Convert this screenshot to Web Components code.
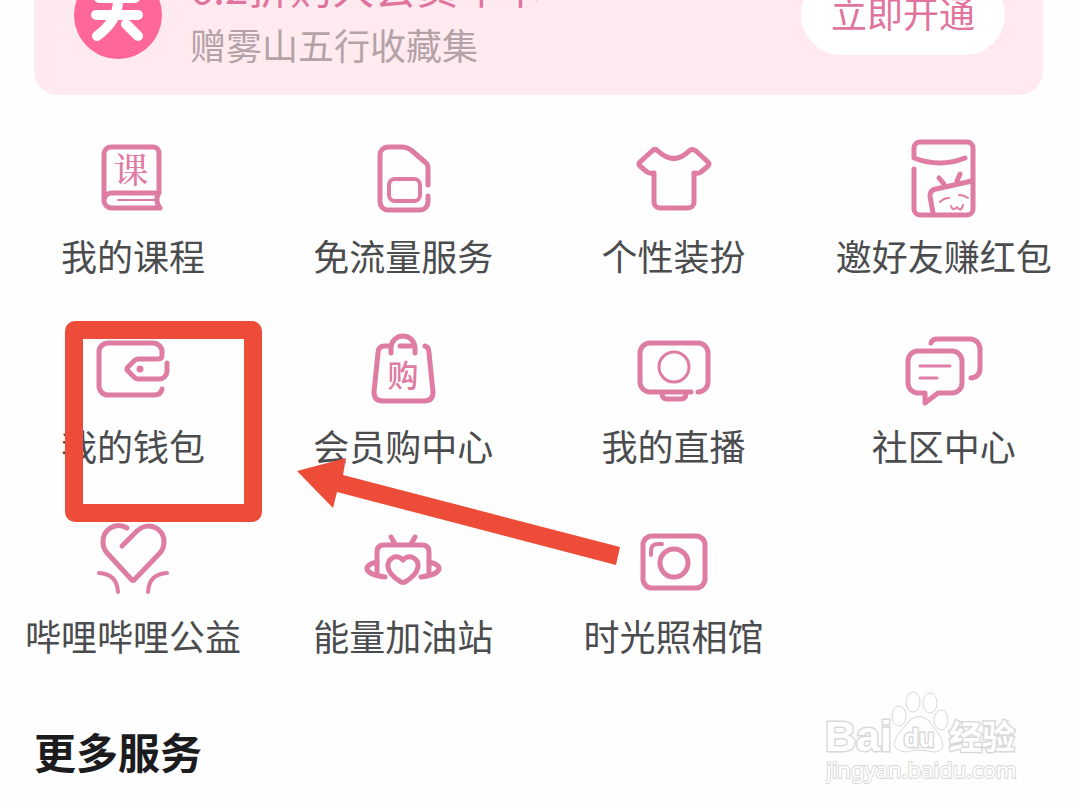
<!DOCTYPE html>
<html lang="zh-CN">
<head>
<meta charset="UTF-8">
<meta name="viewport" content="width=device-width, initial-scale=1">
<title>我的服务</title>
<style>
  body {
    margin: 0;
    position: relative;
    background: #fefefe;
    font-family: "Noto Sans CJK SC", sans-serif;
    overflow-x: hidden;
  }
</style>
</head>
<body>
<service-page></service-page>

<script>
const icons = {
  course: `
    <path d="M11 62V15a7 7 0 0 1 7-7H60a6 6 0 0 1 6 6V54H18.500a7.500 7.500 0 0 0 0 15H67Q61 61 66 54"/>
    <path d="M25 61H62" stroke-width="2"/>
    <text x="38" y="44" font-size="35" font-family="Noto Serif CJK SC, Noto Sans CJK SC, serif" font-weight="700">课</text>`,
  sim: `
    <path d="M65 46V29q0-4-3-6L48 11q-4-3-8-3H25a8 8 0 0 0-8 8V63a8 8 0 0 0 8 8H57a8 8 0 0 0 8-8V57"/>
    <rect x="26" y="40" width="31" height="22" rx="6" stroke-width="4"/>`,
  dress: `
    <path d="M24 12Q40 27 55 12Q58 9 62 12L74 23Q76 25 74 27L67 33Q65 35 60 34V63a6 6 0 0 1-6 6H26a6 6 0 0 1-6-6V34Q16 35 13 33L6 27Q4 25 6 23L18 12Q21 9 24 12Z"/>`,
  packet: `
    <path d="M61 19Q36 29 10 19V9a6 6 0 0 1 6-6H63a6 6 0 0 1 6 6V70a6 6 0 0 1-6 6H16a6 6 0 0 1-6-6V30"/>
    <path d="M29 74L26 57q0-6 6-7L68 42M35 39l5 6M56 35l-3 7"/>
    <path d="M36 63q4-4 9-4M55 56q5 0 9 3M47 67q2 6 6 1q4 6 6-2" stroke-width="2"/>`,
  wallet: `
    <path d="M69 60q-1 6-8 6H15a9 9 0 0 1-9-9V23a9 9 0 0 1 9-9H60a9 9 0 0 1 9 9v3q0 4-4 4H45q-2 0-4 2L35 38q-2 2 0 4l6 6q2 2 4 2H66a8 8 0 0 0 8-8V34"/>
    <circle cx="47" cy="40" r="3.500" fill="currentColor" stroke="none"/>`,
  bag: `
    <path d="M28 17H22q-7 0-7 7L11 63q0 9 9 9H61q9 0 9-9L66 24q0-6-4-7M28 24V19a12 12 0 0 1 24 0V24M37 17H51"/>
    <text x="40" y="58" font-size="31">购</text>`,
  live: `
    <path d="M57 63H16a10 10 0 0 1-10-10V24a10 10 0 0 1 10-10H64a10 10 0 0 1 10 10V53a10 10 0 0 1-10 10"/>
    <path d="M28 64q0 6 5 6H47q5 0 5-6"/>
    <circle cx="40" cy="38" r="15" stroke-width="3"/>`,
  community: `
    <path d="M14 22H48a10 10 0 0 1 10 10V54a10 10 0 0 1-10 10H34L21 74V64H14a10 10 0 0 1-10-10V32a10 10 0 0 1 10-10Z"/>
    <path d="M27 14q1-4 7-4H66a10 10 0 0 1 10 10V39q0 9-9 10"/>
    <path d="M16 37H46M16 49H33" stroke-width="3"/>`,
  charity: `
    <path d="M34 9C24 3 10 9 10 23Q10 30 15 35L38 60q2 3 4 0L66 35Q71 30 71 23C71 8 54 2 44 12L29 27"/>
    <path d="M6 54Q24 55 25 73M74 54Q56 55 55 73" stroke-width="4"/>`,
  energy: `
    <path d="M14 54V33q0-7 7-7H59q7 0 7 7V54M28 18l4 7M52 18l-4 7"/>
    <path d="M14 43C-1 46 0 55 22 58M66 43C81 46 80 55 58 58"/>
    <path d="M40 41C33 34 24 40 25 48C26 55 33 60 38 63q2 1 4 0C47 60 54 55 55 48C56 40 47 34 40 41Z"/>`,
  camera: `
    <rect x="9" y="17" width="62" height="52" rx="9"/>
    <circle cx="40" cy="44" r="14"/>
    <path d="M17 36V32q0-7 7-7h4" stroke-width="4"/>`
};

class ServicePage extends HTMLElement {
  constructor() {
    super();
    this.attachShadow({ mode: 'open' });
  }

  connectedCallback() {
    this.shadowRoot.innerHTML = `
      <style>
        :host {
          display: block;
        }

        /* the page is scrolled past the top of the banner */
        main {
          margin-top: -66px;
        }

        .services {
          display: grid;
          grid-template-columns: repeat(4, 1fr);
          row-gap: 54px;
          margin: 44px -2px 0;
        }

        h2 {
          margin: 66px 34px 22px;
          font-size: 42px;
          line-height: 60px;
          font-weight: 700;
          color: #1c1c1e;
        }
      </style>
      <main>
        <vip-banner>
          <span slot="title">6.2折购大会员年卡</span>
          <span slot="note">赠雾山五行收藏集</span>
          <span slot="action">立即开通</span>
        </vip-banner>
        <nav class="services">
          <service-item icon="course">我的课程</service-item>
          <service-item icon="sim">免流量服务</service-item>
          <service-item icon="dress">个性装扮</service-item>
          <service-item icon="packet">邀好友赚红包</service-item>
          <service-item icon="wallet">我的钱包</service-item>
          <service-item icon="bag">会员购中心</service-item>
          <service-item icon="live">我的直播</service-item>
          <service-item icon="community">社区中心</service-item>
          <service-item icon="charity">哔哩哔哩公益</service-item>
          <service-item icon="energy">能量加油站</service-item>
          <service-item icon="camera">时光照相馆</service-item>
        </nav>
        <h2>更多服务</h2>
      </main>
      <guide-marks></guide-marks>
      <site-watermark></site-watermark>
    `;
  }
}

class VipBanner extends HTMLElement {
  constructor() {
    super();
    this.attachShadow({ mode: 'open' });
  }

  connectedCallback() {
    this.shadowRoot.innerHTML = `
      <style>
        :host {
          display: block;
          padding: 0 34px;
        }

        .banner {
          display: flex;
          align-items: center;
          gap: 28px;
          height: 161px;
          padding: 0 38px;
          border-radius: 24px;
          background: #feeaef;
        }

        .logo {
          flex: none;
          width: 90px;
          height: 90px;
        }

        .text {
          flex: 1;
          display: flex;
          flex-direction: column;
          gap: 4px;
          padding-bottom: 6px;
          white-space: nowrap;
        }

        .title {
          font-size: 42px;
          line-height: 60px;
          color: #e0749d;
        }

        .note {
          font-size: 36px;
          line-height: 48px;
          color: #b3a2a8;
        }

        button {
          padding: 0 30px 6px;
          border: 0;
          border-radius: 40px;
          background: #fff;
          font-family: inherit;
          font-size: 36px;
          line-height: 74px;
          color: #e0749d;
        }
      </style>
      <section class="banner">
        <svg class="logo" viewBox="0 0 90 90" aria-hidden="true">
          <circle cx="46" cy="45" r="44" fill="#ff6699"/>
          <path d="M27 28H63M24 45H66M46 28Q47 50 25 66M54 54L66 66"
            fill="none" stroke="#fff" stroke-width="10" stroke-linecap="round"/>
        </svg>
        <div class="text">
          <div class="title"><slot name="title"></slot></div>
          <div class="note"><slot name="note"></slot></div>
        </div>
        <button type="button"><slot name="action"></slot></button>
      </section>
    `;
  }
}

class ServiceItem extends HTMLElement {
  constructor() {
    super();
    this.attachShadow({ mode: 'open' });
  }

  connectedCallback() {
    this.shadowRoot.innerHTML = `
      <style>
        :host {
          display: block;
        }

        a {
          display: flex;
          flex-direction: column;
          align-items: center;
          gap: 16px;
          font-size: 36px;
          line-height: 40px;
          white-space: nowrap;
          text-decoration: none;
          color: #4b4c4e;
        }

        svg {
          width: 80px;
          height: 80px;
          overflow: visible;
          color: #df7ca3;
          fill: none;
          stroke: currentColor;
          stroke-width: 5;
          stroke-linecap: round;
          stroke-linejoin: round;
        }

        svg text {
          fill: currentColor;
          stroke: none;
          font-weight: 500;
          text-anchor: middle;
        }
      </style>
      <a href="#">
        <svg viewBox="0 0 80 80">${icons[this.getAttribute('icon')]}</svg>
        <span><slot></slot></span>
      </a>
    `;
  }
}

// red frame and arrow that point out the wallet entry
class GuideMarks extends HTMLElement {
  constructor() {
    super();
    this.attachShadow({ mode: 'open' });
  }

  connectedCallback() {
    this.shadowRoot.innerHTML = `
      <style>
        :host {
          position: absolute;
          top: 321px;
          left: 65px;
          pointer-events: none;
        }

        svg {
          display: block;
          fill: #ec4c38;
        }
      </style>
      <svg width="556" height="246" viewBox="0 0 556 246" aria-hidden="true">
        <path fill-rule="evenodd" d="M10 0H187a10 10 0 0 1 10 10V191a10 10 0 0 1-10 10H10a10 10 0 0 1-10-10V10a10 10 0 0 1 10-10ZM18 18V183H179V18Z"/>
        <path d="M232 150L281 137L278 154L555 226L551 244L272 171L268 187Z"/>
      </svg>
    `;
  }
}

class SiteWatermark extends HTMLElement {
  constructor() {
    super();
    this.attachShadow({ mode: 'open' });
  }

  connectedCallback() {
    this.shadowRoot.innerHTML = `
      <style>
        :host {
          position: absolute;
          top: 690px;
          right: 52px;
          pointer-events: none;
        }

        svg {
          display: block;
          fill: #fff;
          stroke: #d9d9d9;
          stroke-width: 1;
          font-family: "Liberation Sans", "Noto Sans CJK SC", sans-serif;
          font-weight: 700;
        }

        .stroked {
          stroke-width: 3;
          paint-order: stroke;
        }

        .address {
          font-family: "Noto Sans", sans-serif;
          font-weight: 400;
          stroke-width: 2;
          paint-order: stroke;
        }
      </style>
      <svg width="200" height="98" viewBox="0 0 200 98">
        <text class="stroked" x="0" y="61" font-size="43">Bai</text>
        <ellipse cx="74" cy="26" rx="7" ry="10"/>
        <ellipse cx="88" cy="12" rx="7" ry="10"/>
        <ellipse cx="105" cy="13" rx="7" ry="10"/>
        <ellipse cx="116" cy="30" rx="7" ry="10"/>
        <path d="M84 31Q94 22 104 31L115 46Q123 62 108 62Q94 58 81 62Q64 60 72 46Z"/>
        <text class="stroked" x="94" y="57" font-size="25" text-anchor="middle">du</text>
        <text class="stroked" x="124" y="59" font-size="33">经验</text>
        <text class="address" x="1" y="88" font-size="22">jingyan.baidu.com</text>
      </svg>
    `;
  }
}

customElements.define('service-item', ServiceItem);
customElements.define('vip-banner', VipBanner);
customElements.define('guide-marks', GuideMarks);
customElements.define('site-watermark', SiteWatermark);
customElements.define('service-page', ServicePage);
</script>
</body>
</html>
